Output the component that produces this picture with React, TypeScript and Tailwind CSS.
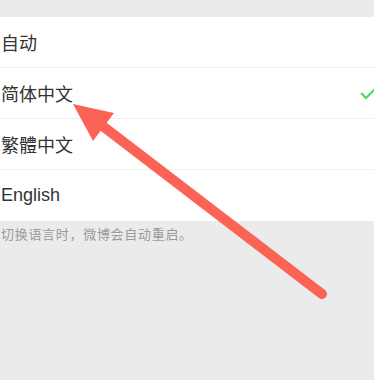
import React from "react";

const rows = ["自动", "简体中文", "繁體中文", "English"];

export default function App() {
  return (
    <div
      className="relative w-[374px] h-[380px] bg-[#ebebeb] overflow-hidden"
      style={{ fontFamily: '"Noto Sans CJK SC", "Liberation Sans", sans-serif' }}
    >
      <div className="h-[17px]" />
      <div className="bg-white">
        {rows.map((r, i) => (
          <div
            key={r}
            className={`flex items-center justify-between h-[51px] pl-[1px] text-[18px] text-[#333333] ${
              i < rows.length - 1 ? "border-b border-[#f0f0f0]" : ""
            }`}
          >
            <span style={r === "English" ? { fontFamily: '"Liberation Sans", sans-serif' } : undefined}>{r}</span>
            {i === 1 && (
              <svg width="17" height="14" viewBox="0 0 17 14" className="mr-[-3px]">
                <path d="M1 7 L6 12 L16 2" fill="none" stroke="#4cd964" strokeWidth="2.2" />
              </svg>
            )}
          </div>
        ))}
      </div>
      <div className="pl-[1px] pt-[3px] text-[13px] tracking-[0.7px] text-[#9a9a9a]">切换语言时，微博会自动重启。</div>
      <svg className="absolute left-0 top-0" width="374" height="380" viewBox="0 0 374 380">
        <line x1="322" y1="294" x2="100" y2="124" stroke="#fa6355" strokeWidth="10" strokeLinecap="round" />
        <polygon points="73,104 114,113 93,141" fill="#fa6355" />
      </svg>
    </div>
  );
}
